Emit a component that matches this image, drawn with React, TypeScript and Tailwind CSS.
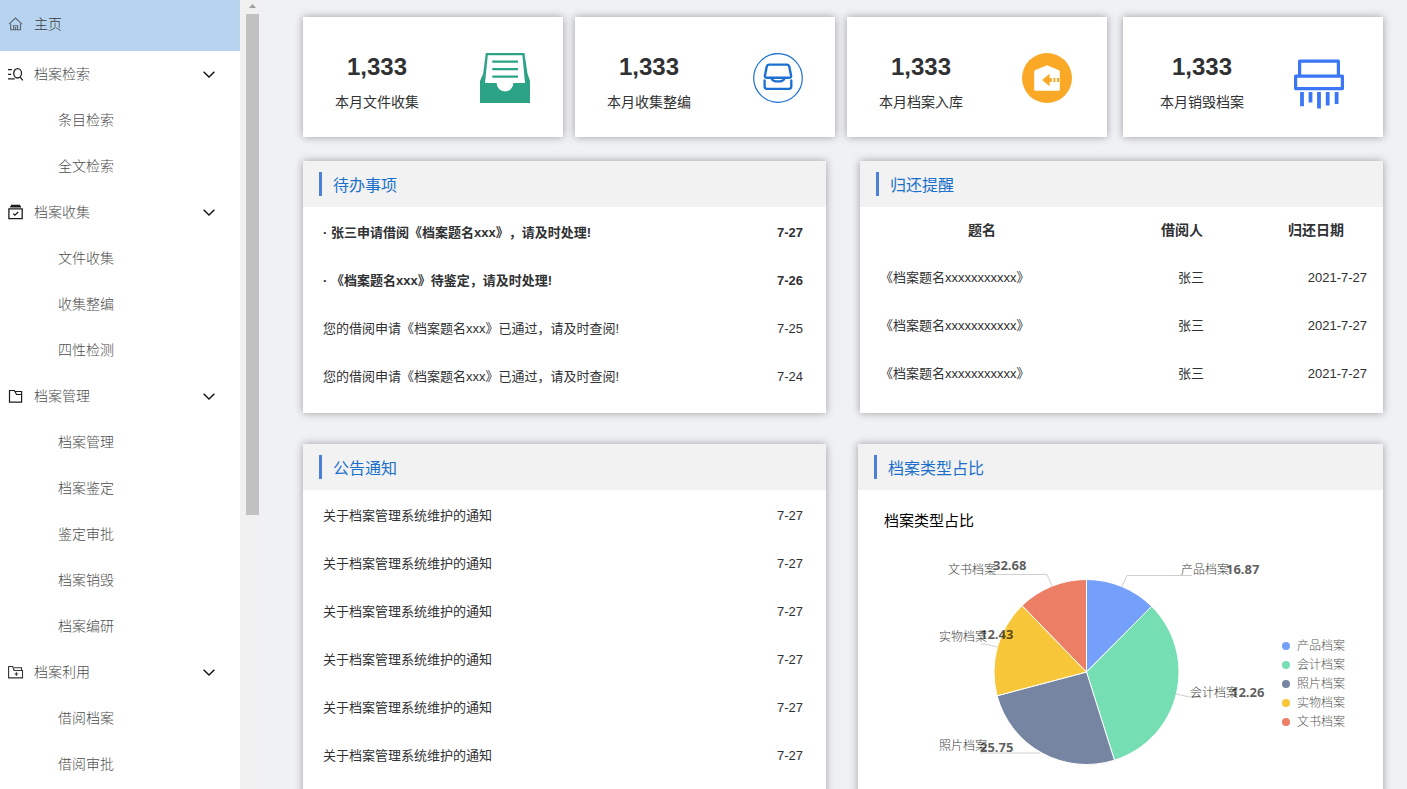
import React from "react";

type NavGroup = { title: string; icon: React.ReactNode; items: string[] };

const HomeIcon = () => (
  <svg className="size-4 shrink-0 text-[#5c6670]" viewBox="0 0 16 16" fill="none" stroke="currentColor" strokeWidth="1.1">
    <path d="M1 8.200 7.500 2l6.500 6.200M2.700 7.800v6h9.800v-6M5.600 13.800V9.800h4v4M7.600 11v2.800" />
  </svg>
);

const SearchListIcon = () => (
  <svg className="size-4 shrink-0 text-[#222]" viewBox="0 0 16 16" fill="none" stroke="currentColor" strokeWidth="1.300">
    <path d="M0 3.600h4M0 8.300h3.200M0 12.900h6.800M12 10.900l2.800 3.400" />
    <ellipse cx="9.600" cy="7.300" rx="3.900" ry="4.700" />
  </svg>
);

const ArchiveBoxIcon = () => (
  <svg className="size-4 shrink-0 text-[#1c1c1c]" viewBox="0 0 16 16" fill="none" stroke="currentColor" strokeWidth="1.300">
    <path d="M.9 4.900h13.300v9.800H.9zM5.200 9.600l1.700 1.600 3.300-3.200" />
    <path d="M2.200 2.700h10.800M3 1.500h9.200" strokeWidth="1.500" />
  </svg>
);

const FolderIcon = () => (
  <svg className="size-4 shrink-0 text-[#1c1c1c]" viewBox="0 0 16 16" fill="none" stroke="currentColor" strokeWidth="1.200">
    <path d="M1.500 2.500h4.800l2.300 4h5v7.600H1.500zM6.300 3.500h7.300v3" />
  </svg>
);

const FolderPlusIcon = () => (
  <svg className="size-4 shrink-0 text-[#333]" viewBox="0 0 16 16" fill="none" stroke="currentColor" strokeWidth="1.100">
    <path d="M.6 2.500h4.200l1.200 4h8.500v7.400H.6zM6 3.800h7.500v2.600M8.400 8.200v3.600M6.600 10h3.600" />
  </svg>
);

const Chevron = () => (
  <svg className="h-3 w-3 shrink-0 text-[#111]" viewBox="0 0 12 12" fill="none" stroke="currentColor" strokeWidth="1.400">
    <path d="M.6 3.700 6 9l5.400-5.300" />
  </svg>
);

const groups: NavGroup[] = [
  { title: "档案检索", icon: <SearchListIcon />, items: ["条目检索", "全文检索"] },
  { title: "档案收集", icon: <ArchiveBoxIcon />, items: ["文件收集", "收集整编", "四性检测"] },
  { title: "档案管理", icon: <FolderIcon />, items: ["档案管理", "档案鉴定", "鉴定审批", "档案销毁", "档案编研"] },
  { title: "档案利用", icon: <FolderPlusIcon />, items: ["借阅档案", "借阅审批"] },
];

function Sidebar() {
  return (
    <nav className="w-60 shrink-0 overflow-hidden bg-white text-sm font-light text-[#4d4d4d] shadow-[0_0_8px_rgba(0,0,0,0.2)]">
      <a href="#home" className="flex h-[51px] items-center gap-[10px] bg-[#b6d4f0] pb-1 pl-2 text-[#3c3c3c]">
        <HomeIcon />
        主页
      </a>
      {groups.map((g) => (
        <div key={g.title}>
          <button type="button" className="flex h-[46px] w-full items-center gap-[10px] pl-2 pr-[25px] text-left">
            {g.icon}
            <span className="flex-1">{g.title}</span>
            <Chevron />
          </button>
          <ul>
            {g.items.map((item) => (
              <li key={item}>
                <a href={"#" + item} className="flex h-[46px] items-center pl-[58px]">
                  {item}
                </a>
              </li>
            ))}
          </ul>
        </div>
      ))}
    </nav>
  );
}

function ScrollTrack() {
  return (
    <div className="flex w-5 shrink-0 flex-col items-end bg-[#f0f0f1] pr-px">
      <div className="flex h-[14px] w-[13px] items-center justify-center pb-0.5">
        <svg className="h-1 w-[7px] text-[#a0a0a0]" viewBox="0 0 7 4" fill="currentColor">
          <path d="M0 4 3.500 0 7 4z" />
        </svg>
      </div>
      <div className="h-[501px] w-[13px] bg-[#c1c1c1]" />
    </div>
  );
}

const CollectIcon = () => (
  <svg className="h-[50px] w-[50px]" viewBox="0 0 50 50">
    <path fill="#2ca287" d="M5.800 0h38.600l3.100 20.500L50 28v22H0V28l3.200-7.500z" />
    <path fill="#fff" d="M7.800 2.200h34.600L45 30H33.400a8.400 8.400 0 0 1-16.800 0H5z" />
    <path stroke="#2ca287" strokeWidth="2.200" d="M12.300 8.600H38M12.300 16.200H38M12.300 23.600H38" />
  </svg>
);

const ArrangeIcon = () => (
  <svg className="h-[50px] w-[50px]" viewBox="0 0 50 50" fill="none" stroke="#1c70d2" strokeLinejoin="round" strokeLinecap="round">
    <circle cx="25" cy="25" r="24.300" strokeWidth="1.200" />
    <path strokeWidth="2.400" d="M16.200 11.600h17.600c1.300 0 2 .6 2.400 1.700l1.900 9.400c.2 1.200-.3 2-1.600 2h-23c-1.300 0-1.800-.8-1.600-2l1.900-9.400c.4-1.100 1.100-1.700 2.400-1.700z" />
    <path strokeWidth="2.300" d="M18.500 25.200c.9 4.300 12.100 4.300 13 0M11.600 27.300v6.200c0 1.600.8 2.300 2.200 2.300h22.200c1.500 0 2.300-.7 2.300-2.300v-6.200" />
  </svg>
);

const StoreIcon = () => (
  <svg className="h-[50px] w-[50px]" viewBox="0 0 50 50">
    <circle cx="25" cy="25" r="25" fill="#faa927" />
    <path fill="#fff" d="M25 12.300 36.500 17c.9.4 1.300.9 1.300 1.800v17.400c0 1-.5 1.500-1.500 1.500H13.700c-1 0-1.500-.5-1.500-1.500V18.800c0-.9.4-1.400 1.300-1.800z" />
    <path fill="#faa927" d="m20 27 7.600-6.300V25h2.200v4h-2.200v4.300zM31.400 25h2v4h-2zM35 25h2v4h-2z" />
  </svg>
);

const DestroyIcon = () => (
  <svg className="h-14 w-[50px]" viewBox="0 0 50 56" fill="none" stroke="#3b76f6">
    <path strokeWidth="3.200" strokeLinejoin="round" d="M5.600 8.200h38.800v15H5.600zM1.600 23.200h46.800v12.400H1.600z" />
    <path strokeWidth="3.800" d="M8 39v14.300M16.500 39v10.600M25 39v16.500M33.700 39v13.600M42.600 39v12" />
  </svg>
);

function StatCard({ label, icon, pad }: { label: string; icon: React.ReactNode; pad: string }) {
  return (
    <div className={"flex h-[120px] items-start justify-between bg-white shadow-[0_0_8px_rgba(0,0,0,0.35)] " + pad}>
      <div className="pt-[34px] text-center">
        <p className="text-2xl font-bold leading-8">1,333</p>
        <p className="mt-[9px] text-sm leading-5">{label}</p>
      </div>
      <div className="pt-9">{icon}</div>
    </div>
  );
}

function Panel({ title, children }: { title: string; children: React.ReactNode }) {
  return (
    <section className="min-w-0 bg-white shadow-[0_0_8px_rgba(0,0,0,0.35)]">
      <header className="flex h-[46px] items-center gap-[11px] bg-[#f2f2f2] pl-4">
        <span className="h-6 w-[3px] bg-[#4a80d6]" />
        <h2 className="pt-[3px] text-base text-[#1a70ca]">{title}</h2>
      </header>
      {children}
    </section>
  );
}

type Row = { text: string; date: string; bold?: boolean };

const todos: Row[] = [
  { text: "· 张三申请借阅《档案题名xxx》，请及时处理!", date: "7-27", bold: true },
  { text: "· 《档案题名xxx》待鉴定，请及时处理!", date: "7-26", bold: true },
  { text: "您的借阅申请《档案题名xxx》已通过，请及时查阅!", date: "7-25" },
  { text: "您的借阅申请《档案题名xxx》已通过，请及时查阅!", date: "7-24" },
];

const notices: Row[] = Array.from({ length: 6 }, () => ({ text: "关于档案管理系统维护的通知", date: "7-27" }));

function RowList({ rows }: { rows: Row[] }) {
  return (
    <ul className="pb-3 pl-5 pr-[23px] pt-0.5 text-[13px] [text-spacing-trim:space-all]">
      {rows.map((r, i) => (
        <li key={i} className={r.bold ? "flex h-12 items-center justify-between font-bold" : "flex h-12 items-center justify-between"}>
          <span>{r.text}</span>
          <time>{r.date}</time>
        </li>
      ))}
    </ul>
  );
}

function ReturnTable() {
  return (
    <div className="pr-[11px]">
      <table className="w-full table-fixed text-[13px]">
        <thead>
          <tr className="h-[46px] text-sm">
            <th className="w-[244px]">题名</th>
            <th className="w-[156px]">借阅人</th>
            <th className="w-[112px]">归还日期</th>
          </tr>
        </thead>
        <tbody>
          {[0, 1, 2].map((i) => (
            <tr key={i} className="h-12">
              <td className="pl-5 pt-0.5">《档案题名xxxxxxxxxxx》</td>
              <td className="pr-14 pt-0.5 text-right">张三</td>
              <td className="pr-[5px] pt-0.5 text-right">2021-7-27</td>
            </tr>
          ))}
        </tbody>
      </table>
    </div>
  );
}

const slices = [
  { name: "产品档案", value: 12.43, color: "#749ffa", dot: "bg-[#749ffa]" },
  { name: "会计档案", value: 32.68, color: "#75deb3", dot: "bg-[#75deb3]" },
  { name: "照片档案", value: 25.75, color: "#7585a2", dot: "bg-[#7585a2]" },
  { name: "实物档案", value: 16.87, color: "#f7c739", dot: "bg-[#f7c739]" },
  { name: "文书档案", value: 12.26, color: "#eb7e65", dot: "bg-[#eb7e65]" },
];

const callouts = [
  { name: "产品档案", num: "16.87", x: 323, y: 42, nx: 368, ny: 42, line: "M264 54 269 43.500H334" },
  { name: "会计档案", num: "12.26", x: 332, y: 165, nx: 373, ny: 165, line: "M318 162 332 165H342" },
  { name: "文书档案", num: "32.68", x: 90, y: 42, nx: 135, ny: 38, line: "M194 54 189 42.500H132" },
  { name: "实物档案", num: "12.43", x: 81, y: 109, nx: 122, ny: 107, line: "M139 115 127 112H123" },
  { name: "照片档案", num: "25.75", x: 81, y: 218, nx: 122, ny: 220, line: "M182 221H122" },
];

const CX = 228.5;
const CY = 140;
const R = 92.5;

function PieChart() {
  const total = slices.reduce((sum, s) => sum + s.value, 0);
  let angle = 0;
  const paths = slices.map((s) => {
    const start = angle;
    angle += (s.value / total) * Math.PI * 2;
    const p = (a: number) => `${CX + R * Math.sin(a)} ${CY - R * Math.cos(a)}`;
    return { color: s.color, d: `M${CX} ${CY}L${p(start)}A${R} ${R} 0 0 1 ${p(angle)}Z` };
  });
  return (
    <svg className="h-[304px] w-[424px] shrink-0" viewBox="0 0 424 304" role="img" aria-label="档案类型占比">
      {paths.map((p) => (
        <path key={p.color} d={p.d} fill={p.color} stroke="#fff" strokeWidth="1" />
      ))}
      {callouts.map((c) => (
        <g key={c.name}>
          <path d={c.line} fill="none" stroke="#cfcfcf" />
          <text x={c.x} y={c.y} className="fill-[#404040] text-xs font-light">
            {c.name}
          </text>
          <text x={c.nx} y={c.ny} className="fill-black/65 font-['Noto_Sans'] text-[13px] font-bold">
            {c.num}
          </text>
        </g>
      ))}
    </svg>
  );
}

export default function App() {
  return (
    <div className="flex h-screen overflow-hidden bg-[#f0f1f5] font-['Liberation_Sans','Noto_Sans_CJK_SC',sans-serif] text-[#303133]">
      <Sidebar />
      <ScrollTrack />
      <main className="min-w-0 flex-1 overflow-hidden pl-[43px] pr-6 pt-[17px]">
        <div className="grid grid-cols-[804fr_260fr] gap-4">
          <div className="grid grid-cols-3 gap-3">
            <StatCard label="本月文件收集" icon={<CollectIcon />} pad="pl-8 pr-[33px]" />
            <StatCard label="本月收集整编" icon={<ArrangeIcon />} pad="px-8" />
            <StatCard label="本月档案入库" icon={<StoreIcon />} pad="pl-8 pr-[35px]" />
          </div>
          <StatCard label="本月销毁档案" icon={<DestroyIcon />} pad="pl-[37px] pr-[39px]" />
        </div>
        <div className="mt-6 grid grid-cols-2 gap-[34px]">
          <Panel title="待办事项">
            <RowList rows={todos} />
          </Panel>
          <Panel title="归还提醒">
            <ReturnTable />
          </Panel>
        </div>
        <div className="mt-[31px] grid grid-cols-[523fr_525fr] gap-8">
          <Panel title="公告通知">
            <RowList rows={notices} />
          </Panel>
          <Panel title="档案类型占比">
            <h3 className="pl-[26px] pt-5 text-[15px] leading-[22px] text-black">档案类型占比</h3>
            <div className="flex items-center">
              <PieChart />
              <ul className="text-xs font-light leading-[19px] text-[#555]">
                {slices.map((s) => (
                  <li key={s.name} className="flex items-center gap-[7px]">
                    <span className={"size-2 rounded-full " + s.dot} />
                    {s.name}
                  </li>
                ))}
              </ul>
            </div>
          </Panel>
        </div>
      </main>
    </div>
  );
}
